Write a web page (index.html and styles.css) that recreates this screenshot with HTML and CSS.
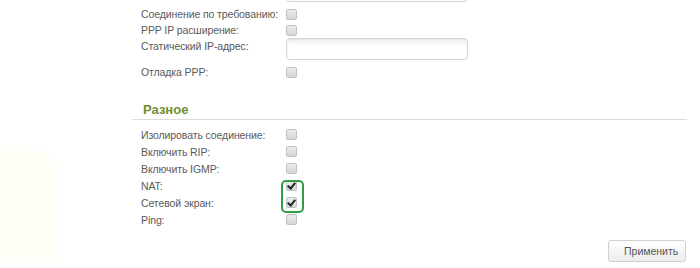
FILE: index.html
```html
<!DOCTYPE html>
<html lang="ru">
<head>
<meta charset="utf-8">
<link rel="stylesheet" href="styles.css">
</head>
<body>
<div class="glow"></div>
<div class="page">
  <div class="form top">
    <div class="row r-input"><span class="label"></span><span class="field"></span></div>
    <div class="row r1"><span class="label">Соединение по требованию:</span><span class="cb"></span></div>
    <div class="row r2"><span class="label">PPP IP расширение:</span><span class="cb"></span></div>
    <div class="row r-input r3"><span class="label">Статический IP-адрес:</span><span class="field"></span></div>
    <div class="row r4"><span class="label">Отладка PPP:</span><span class="cb"></span></div>
  </div>
  <div class="section">
    <h2 class="heading">Разное</h2>
    <div class="form misc">
      <div class="row"><span class="label">Изолировать соединение:</span><span class="cb"></span></div>
      <div class="row"><span class="label">Включить RIP:</span><span class="cb"></span></div>
      <div class="row"><span class="label">Включить IGMP:</span><span class="cb"></span></div>
      <div class="row"><span class="label">NAT:</span><span class="cb checked"></span></div>
      <div class="row"><span class="label">Сетевой экран:</span><span class="cb checked"></span></div>
      <div class="row"><span class="label">Ping:</span><span class="cb"></span></div>
      <div class="highlight"></div>
    </div>
  </div>
  <div class="actions"><button class="btn">Применить</button></div>
</div>
</body>
</html>
```
FILE: styles.css
```css
html, body {
  margin: 0;
  padding: 0;
  background: #fff;
  overflow: hidden;
}
body {
  width: 700px;
  height: 268px;
  position: relative;
  font-family: "Liberation Sans", Arial, sans-serif;
  font-size: 10.5px;
  letter-spacing: -0.1px;
  color: #5a5a5a;
}
.glow {
  position: absolute;
  left: 0;
  top: 150px;
  width: 58px;
  height: 112px;
  background: #fdfff4;
  border-radius: 0 30px 0 0;
  filter: blur(4px);
}
.page {
  position: relative;
  padding-left: 141px;
}
.form {
  display: flex;
  flex-direction: column;
}
.top {
  margin-top: -20px;
}
.row {
  display: flex;
  align-items: center;
  height: 16px;
}
.label {
  width: 145px;
  flex: none;
  white-space: nowrap;
}
.r-input {
  height: 22px;
  align-items: flex-start;
}
.r1 { margin-top: 4px; }
.r3 .label { padding-top: 2px; }
.r4 { height: 18px; margin-top: 3px; }
.field {
  width: 180px;
  height: 20px;
  border: 1px solid #d4d4d4;
  border-radius: 4px;
  background: linear-gradient(#f4f4f4, #fff 40%);
  box-shadow: inset 0 1px 2px rgba(0,0,0,0.08);
}
.cb {
  width: 9px;
  height: 9px;
  border: 1px solid #c2c2c2;
  border-radius: 2px;
  background: linear-gradient(#ececec, #d6d6d6);
  position: relative;
}
.cb.checked::after {
  content: "";
  position: absolute;
  left: 2px;
  top: 0px;
  width: 3px;
  height: 6px;
  border: solid #222;
  border-width: 0 2px 2px 0;
  transform: rotate(40deg);
}
.section {
  margin-top: 18px;
}
.heading {
  margin: 0 13px 0 -9px;
  padding: 0 0 0 11px;
  height: 20px;
  line-height: 21px;
  font-size: 13px;
  letter-spacing: 0;
  font-weight: bold;
  color: #6e8f2e;
  font-family: "Liberation Sans", Arial, sans-serif;
  border-bottom: 1px solid #dcdcdc;
}
.misc {
  margin-top: 6px;
  position: relative;
}
.misc .row {
  height: 17px;
}
.highlight {
  position: absolute;
  left: 140px;
  top: 54px;
  width: 19px;
  height: 29px;
  border: 2px solid #2f9e48;
  border-radius: 5px;
}
.actions {
  display: flex;
  justify-content: flex-end;
  padding-right: 14px;
  margin-top: 12px;
}
.btn {
  width: 78px;
  height: 22px;
  border: 1px solid #cfcfcf;
  border-radius: 3px;
  background: linear-gradient(#fff, #ececec);
  font-family: "Liberation Sans", Arial, sans-serif;
  font-size: 10.5px;
  color: #555;
  padding: 0 0 0 15px;
  text-align: left;
}
```
